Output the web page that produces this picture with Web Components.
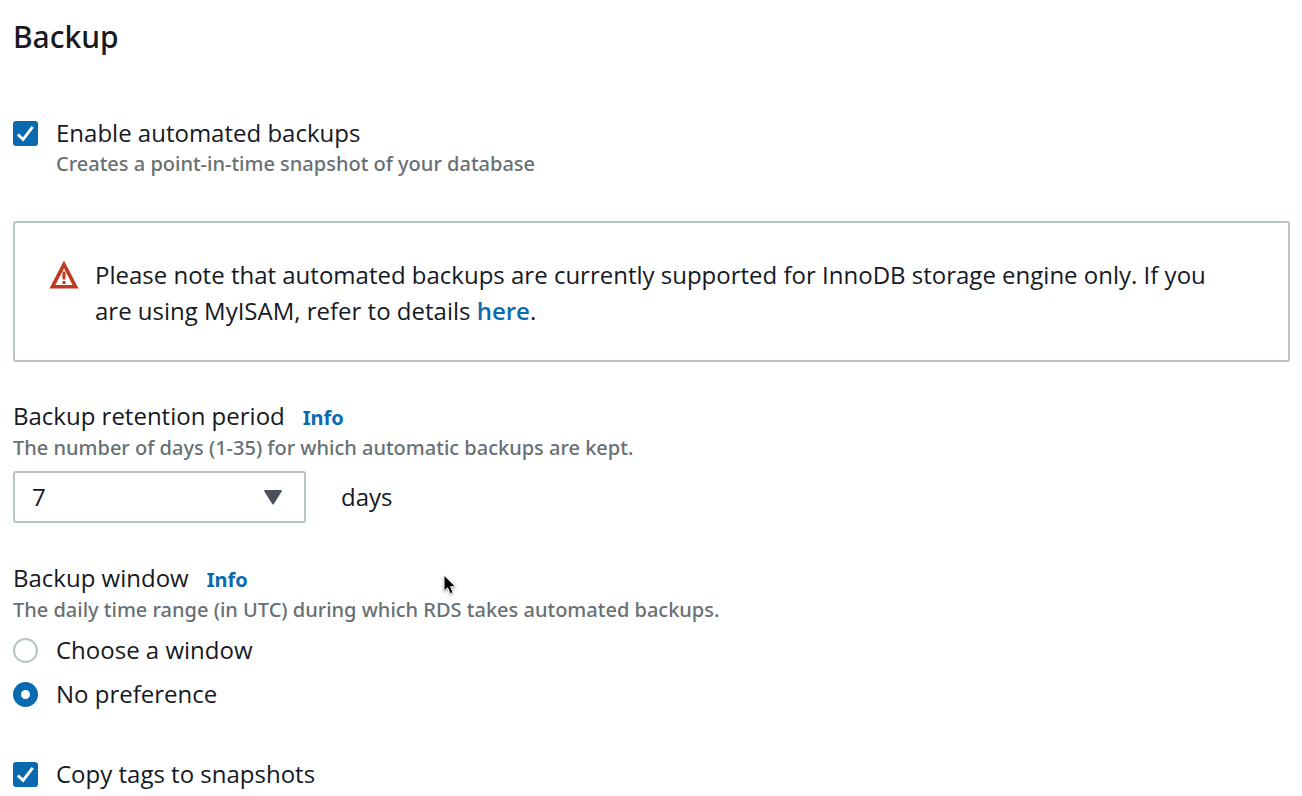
<!DOCTYPE html>
<html lang="en">
<head>
<meta charset="utf-8">
<meta name="viewport" content="width=device-width, initial-scale=1">
<title>Backup</title>
<style>
  :root {
    --ink: #16191f;
    --muted: #687074;
    --accent: #0a6ab0;
    --line: #b8c3c4;
    --warn: #c03a1f;
    --text: 24px;
    --small: 20px;
    --row: 32px;
  }
  body {
    margin: 0;
    background: #fff;
    color: var(--ink);
    font-family: "Open Sans", "Noto Sans", sans-serif;
    font-size: var(--text);
    font-weight: 500;
    line-height: var(--row);
  }
</style>
</head>
<body>
<backup-settings></backup-settings>

<script>
class BaseElement extends HTMLElement {
  render(html) {
    this.attachShadow({ mode: "open" }).innerHTML = html;
  }
}

/* Tick box or radio with a label (slot) and an optional description slot. */
class ChoiceField extends BaseElement {
  connectedCallback() {
    if (this.shadowRoot) return;
    const type = this.getAttribute("type") || "checkbox";
    const checked = this.hasAttribute("checked") ? "checked" : "";
    this.render(`
      <style>
        :host { display: block; }
        label { display: grid; grid-template-columns: 25px 1fr; column-gap: 18px; align-items: center; justify-items: start; }
        .control { display: grid; width: 25px; height: 25px; }
        .control > * { grid-area: 1 / 1; }
        input { appearance: none; margin: 0; width: 25px; height: 25px; box-sizing: border-box;
                border: 2px solid var(--line); background: #fff; }
        input[type=checkbox] { border-radius: 3px; }
        input[type=radio] { border-radius: 50%; }
        input[type=checkbox]:checked { background: var(--accent); border-color: var(--accent); }
        input[type=radio]:checked { border: 8px solid var(--accent); }
        svg { display: none; pointer-events: none; }
        input[type=checkbox]:checked + svg { display: block; }
        ::slotted([slot=description]) { grid-column: 2; }
      </style>
      <label>
        <span class="control">
          <input type="${type}" ${checked}>
          <svg width="25" height="25" viewBox="0 0 26 26" fill="none" stroke="#fff" stroke-width="3" aria-hidden="true"><path d="M5 14 L10.5 19 L20.5 6"/></svg>
        </span>
        <span><slot></slot></span>
        <slot name="description"></slot>
      </label>`);
    const input = this.shadowRoot.querySelector("input");
    input.addEventListener("change", () => {
      if (type === "radio") {
        for (const peer of this.parentElement.querySelectorAll("choice-field[type=radio]")) {
          if (peer !== this) peer.shadowRoot.querySelector("input").checked = false;
        }
      }
    });
  }
}

class HelpText extends BaseElement {
  connectedCallback() {
    if (this.shadowRoot) return;
    this.render(`
      <style>:host { display: block; font-family: "Noto Sans", sans-serif; font-size: var(--small); line-height: var(--help-row, 32px); color: var(--muted); }</style>
      <slot></slot>`);
  }
}

class WarningBox extends BaseElement {
  connectedCallback() {
    if (this.shadowRoot) return;
    this.render(`
      <style>
        :host { display: flex; gap: 16px; padding: 34px 68px 31px 34px; border: 2px solid var(--line);
                border-radius: 3px; line-height: 36px; }
        svg { flex: none; margin-top: 3px; }
        p { margin: 0; }
      </style>
      <svg width="30" height="30" viewBox="0 0 30 30" fill="none" stroke="var(--warn)" aria-hidden="true">
        <path d="M15 4.5 L26.6 26.8 H3.4 Z" stroke-width="3.6" stroke-linejoin="miter"/>
        <path d="M15 11.5 V19.5 M15 21 V24" stroke-width="3"/>
      </svg>
      <p><slot></slot></p>`);
  }
}

class FieldHeading extends BaseElement {
  connectedCallback() {
    if (this.shadowRoot) return;
    this.render(`
      <style>
        :host { display: flex; gap: 18px; align-items: baseline; }
        a { font: 700 20px/24px "Noto Sans", sans-serif; color: var(--accent); text-decoration: none; }
      </style>
      <span><slot></slot></span><a href="#info">Info</a>`);
  }
}

class DaysSelect extends BaseElement {
  connectedCallback() {
    if (this.shadowRoot) return;
    const options = Array.from({ length: 35 }, (_, i) =>
      `<option${i + 1 === 7 ? " selected" : ""}>${i + 1}</option>`).join("");
    this.render(`
      <style>
        :host { display: block; }
        label { display: flex; align-items: center; gap: 35px; }
        .box { display: grid; align-items: center; width: 293px; }
        .box > * { grid-area: 1 / 1; }
        select { appearance: none; width: 100%; height: 52px; box-sizing: border-box; margin: 0; padding: 0 50px 0 17px;
                 border: 2px solid var(--line); border-radius: 3px; background: #fff; color: inherit; font: inherit; }
        svg { justify-self: end; margin-right: 24px; pointer-events: none; }
      </style>
      <label>
        <span class="box">
          <select aria-label="Backup retention period in days">${options}</select>
          <svg width="18" height="15" viewBox="0 0 18 15" fill="#4b505c" aria-hidden="true"><path d="M1 0 H17 Q18.4 0 17.6 1.4 L9.8 14 Q9 15.2 8.2 14 L0.4 1.4 Q-0.4 0 1 0 Z"/></svg>
        </span>
        <span>days</span>
      </label>`);
  }
}

class PointerMark extends BaseElement {
  connectedCallback() {
    if (this.shadowRoot) return;
    this.render(`
      <style>
        :host { position: absolute; pointer-events: none; }
        svg { display: block; filter: drop-shadow(0 1px 1px #0006); }
      </style>
      <svg width="14" height="22" viewBox="0 0 14 22" aria-hidden="true"><path d="M1 1.2 V17.2 L4.6 13.8 L7.2 19.8 L10.1 18.5 L7.6 12.7 H12.6 Z" fill="#000" stroke="#fff" stroke-width="1"/></svg>`);
  }
}

class BackupSettings extends BaseElement {
  connectedCallback() {
    if (this.shadowRoot) return;
    this.render(`
      <style>
        :host { display: block; position: relative; padding: 17px 12px 4px 13px; }
        h2 { margin: 0 0 60px; font-family: "Noto Sans", sans-serif; font-size: 30px; line-height: 40px; font-weight: 500; }
        choice-field help-text { --help-row: 30px; }
        warning-box { margin: 42px 0 38px; }
        section { margin-bottom: 39px; }
        section:last-of-type { margin-bottom: 0; }
        days-select { margin-top: 7px; }
        .radios { display: grid; gap: 12px; margin: 8px 0 48px; }
        a { color: var(--accent); font-weight: 600; text-decoration: none; }
        pointer-mark { left: 443px; top: 574px; }
      </style>
      <h2>Backup</h2>
      <choice-field checked>Enable automated backups<help-text slot="description">Creates a point-in-time snapshot of your database</help-text></choice-field>
      <warning-box>Please note that automated backups are currently supported for InnoDB storage engine only. If you are using MyISAM, refer to details <a href="#details">here</a>.</warning-box>
      <section>
        <field-heading>Backup retention period</field-heading>
        <help-text>The number of days (1-35) for which automatic backups are kept.</help-text>
        <days-select></days-select>
      </section>
      <section>
        <field-heading>Backup window</field-heading>
        <help-text>The daily time range (in UTC) during which RDS takes automated backups.</help-text>
        <div class="radios" role="radiogroup" aria-label="Backup window">
          <choice-field type="radio">Choose a window</choice-field>
          <choice-field type="radio" checked>No preference</choice-field>
        </div>
        <choice-field checked>Copy tags to snapshots</choice-field>
      </section>
      <pointer-mark></pointer-mark>`);
  }
}

customElements.define("choice-field", ChoiceField);
customElements.define("help-text", HelpText);
customElements.define("warning-box", WarningBox);
customElements.define("field-heading", FieldHeading);
customElements.define("days-select", DaysSelect);
customElements.define("pointer-mark", PointerMark);
customElements.define("backup-settings", BackupSettings);
</script>
</body>
</html>
